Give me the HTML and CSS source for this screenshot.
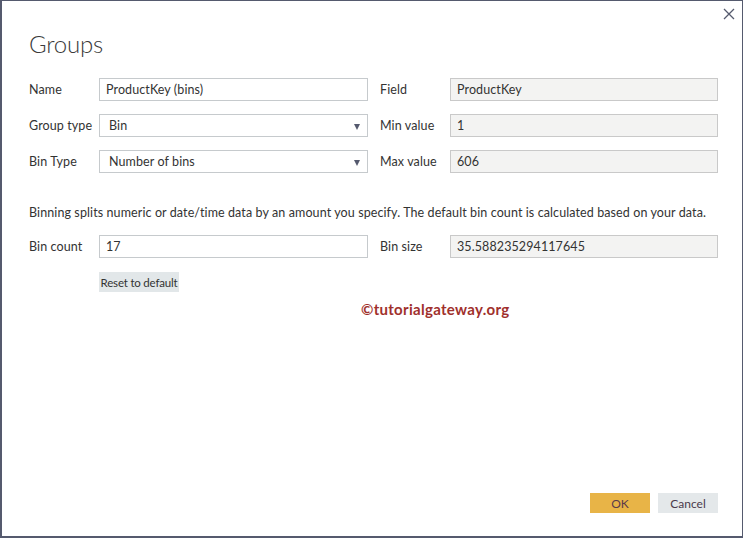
FILE: index.html
```html
<!DOCTYPE html>
<html>
<head>
<meta charset="utf-8">
<link rel="stylesheet" href="styles.css">
</head>
<body>
<div class="dialog">
  <button class="close" aria-label="Close">
    <svg width="12" height="12" viewBox="0 0 12 12"><path d="M1 1L11 11M11 1L1 11" stroke="#555a6e" stroke-width="1.3" fill="none"/></svg>
  </button>
  <h1 class="title">Groups</h1>
  <div class="form">
    <label class="lbl">Name</label>
    <div class="field">ProductKey (bins)</div>
    <label class="lbl lbl-r">Field</label>
    <div class="field ro">ProductKey</div>

    <label class="lbl">Group type</label>
    <div class="field sel">Bin<span class="arrow"></span></div>
    <label class="lbl lbl-r">Min value</label>
    <div class="field ro">1</div>

    <label class="lbl">Bin Type</label>
    <div class="field sel">Number of bins<span class="arrow"></span></div>
    <label class="lbl lbl-r">Max value</label>
    <div class="field ro">606</div>
  </div>
  <p class="desc">Binning splits numeric or date/time data by an amount you specify. The default bin count is calculated based on your data.</p>
  <div class="form">
    <label class="lbl">Bin count</label>
    <div class="field">17</div>
    <label class="lbl lbl-r">Bin size</label>
    <div class="field ro">35.588235294117645</div>
  </div>
  <div class="reset-row"><button class="btn reset">Reset to default</button></div>
  <div class="watermark">©tutorialgateway.org</div>
  <div class="footer">
    <button class="btn ok">OK</button>
    <button class="btn cancel">Cancel</button>
  </div>
</div>
</body>
</html>
```
FILE: styles.css
```css
html, body {
  margin: 0;
  padding: 0;
  background: #ffffff;
}
.dialog {
  position: relative;
  width: 743px;
  height: 538px;
  box-sizing: border-box;
  border-style: solid;
  border-color: #555a6e;
  border-width: 1px 1px 2px 2px;
  background: #ffffff;
  display: flex;
  flex-direction: column;
  padding: 0 24px 23px 27px;
  font-family: Lato, "Open Sans", sans-serif;
  font-size: 12.5px;
  letter-spacing: 0.1px;
  color: #333333;
}
.close {
  position: absolute;
  top: 6px;
  right: 6px;
  width: 14px;
  height: 14px;
  padding: 0;
  border: 0;
  background: transparent;
  display: flex;
  align-items: center;
  justify-content: center;
}
.title {
  margin: 29px 0 0 0;
  font-size: 24px;
  line-height: 28px;
  font-weight: 300;
  color: #3a3a3a;
  font-family: Lato, "Open Sans", sans-serif;
  letter-spacing: -0.2px;
}
.form {
  display: grid;
  grid-template-columns: 70px 269px 82px 268px;
  grid-auto-rows: 23px;
  row-gap: 13px;
  align-items: center;
}
.title + .form {
  margin-top: 20px;
}
.lbl {
  color: #333333;
  white-space: nowrap;
}
.lbl-r {
  padding-left: 12px;
}
.field {
  height: 23px;
  box-sizing: border-box;
  border: 1px solid #c6cacd;
  padding: 0 6px;
  display: flex;
  align-items: center;
  color: #333333;
  background: #ffffff;
  position: relative;
  white-space: nowrap;
}
.field.ro {
  background: #f3f3f2;
  border-color: #c9c9c9;
}
.field.sel {
  padding-left: 9px;
}
.arrow {
  position: absolute;
  right: 7px;
  top: 9px;
  width: 0;
  height: 0;
  border-left: 3px solid transparent;
  border-right: 3px solid transparent;
  border-top: 6px solid #555a6e;
}
.desc {
  margin: 32px 0 14px 0;
  line-height: 16px;
  color: #333333;
  white-space: nowrap;
}
.reset-row {
  margin-top: 14px;
  padding-left: 70px;
}
.btn {
  font-family: inherit;
  font-size: 12px;
  letter-spacing: 0;
  border: 0;
  padding: 0;
  color: #333333;
  white-space: nowrap;
}
.reset {
  width: 80px;
  height: 20px;
  background: #e2e7e9;
  font-size: 11.5px;
  letter-spacing: -0.2px;
  text-align: center;
}
.watermark {
  position: absolute;
  left: 359px;
  top: 299px;
  font-family: Lato, "Open Sans", sans-serif;
  font-weight: 700;
  font-size: 15px;
  letter-spacing: 0.3px;
  color: #a0302c;
}
.footer {
  margin-top: auto;
  display: flex;
  justify-content: flex-end;
  gap: 8px;
}
.ok {
  width: 60px;
  height: 20px;
  background: #e8b447;
  color: #5a3a4a;
}
.cancel {
  width: 60px;
  height: 20px;
  background: #e4e8ea;
  color: #4a3a4a;
}
```
